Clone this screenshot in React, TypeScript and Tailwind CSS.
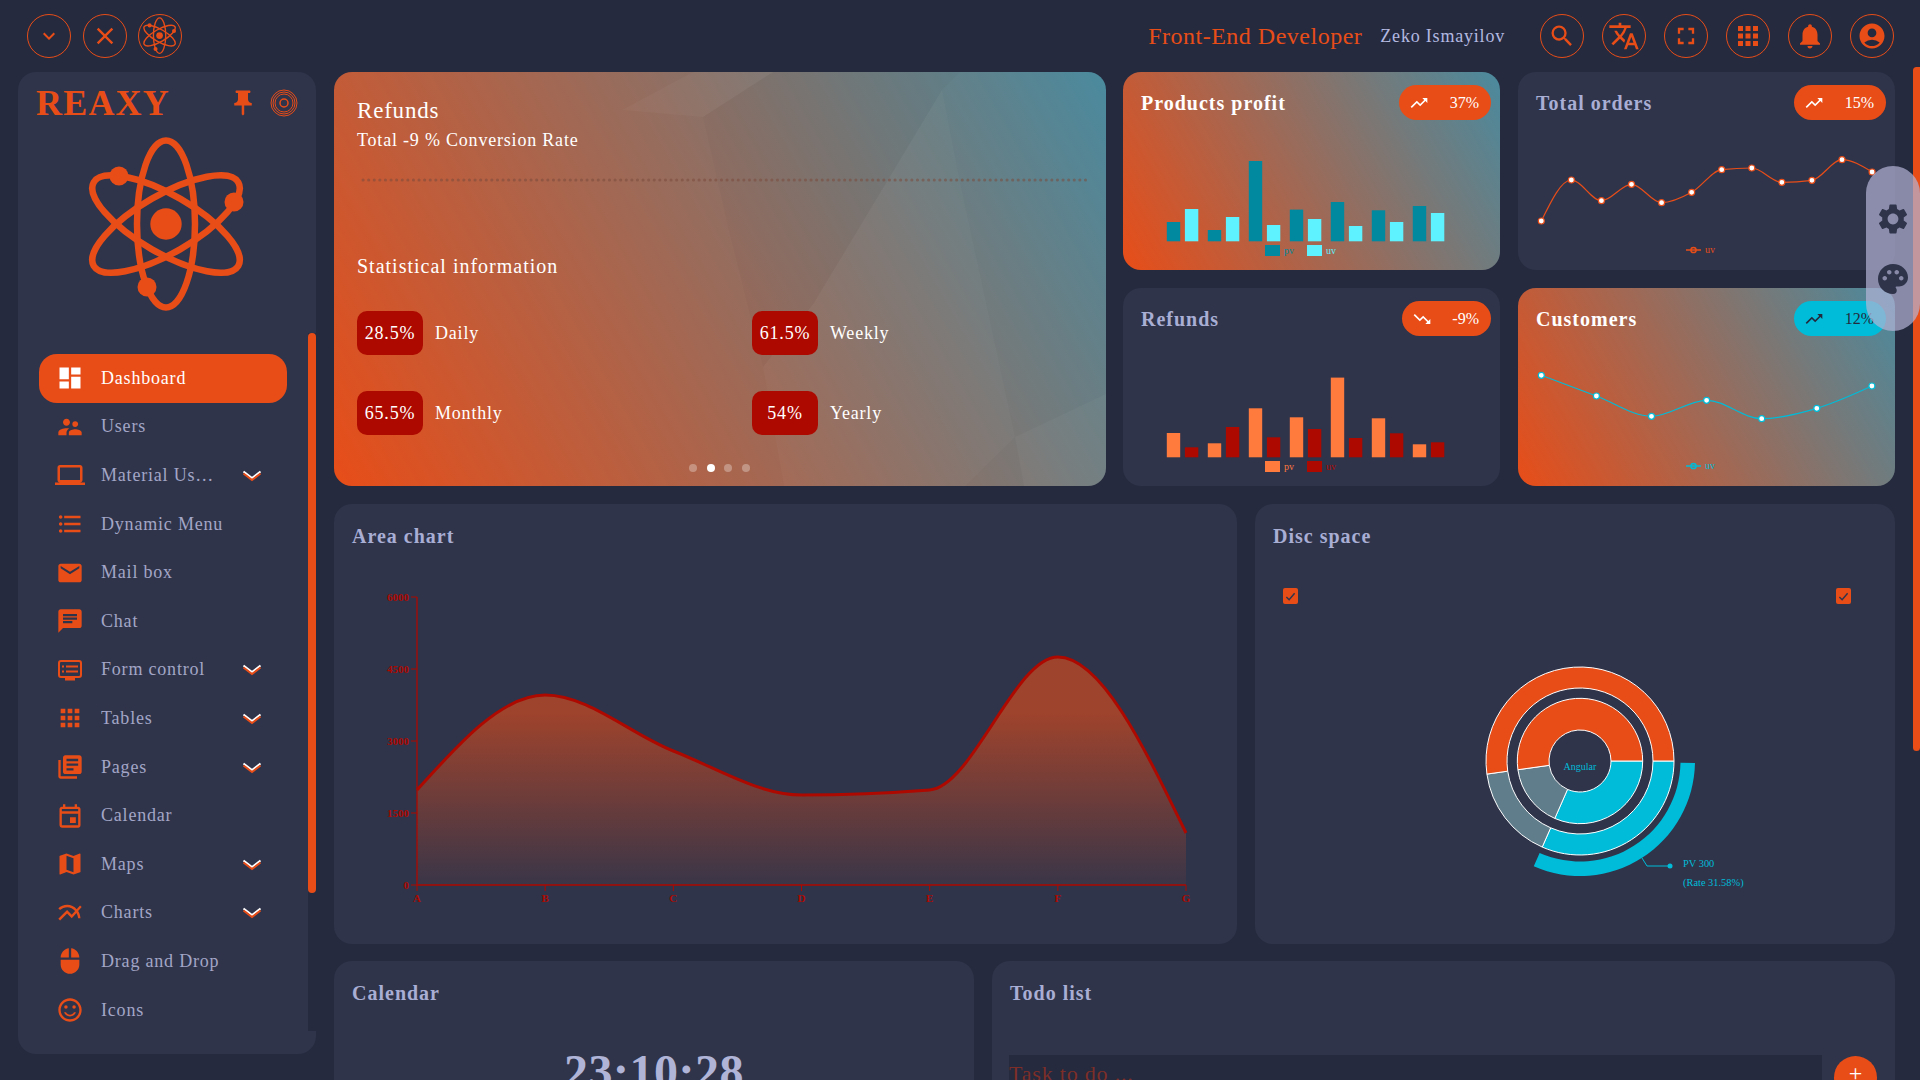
import type { ReactNode } from 'react';
import {
  MdDashboard, MdSupervisorAccount, MdLaptop, MdFormatListBulleted, MdEmail, MdChat, MdLibraryBooks,
  MdOutlineEvent, MdMap, MdMultilineChart, MdMouse, MdOutlineSentimentSatisfied, MdPushPin, MdSearch,
  MdTranslate, MdFullscreen, MdApps, MdNotifications, MdAccountCircle, MdKeyboardArrowDown, MdClose,
  MdTrendingUp, MdTrendingDown, MdSettings, MdPalette,
} from 'react-icons/md';

type Pt = [number, number];

// same curve recharts calls "monotone"
const monotonePath = (pts: Pt[]) => {
  const n = pts.length;
  const dx: number[] = [];
  const slope: number[] = [];
  for (let i = 0; i < n - 1; i++) {
    dx.push(pts[i + 1][0] - pts[i][0]);
    slope.push((pts[i + 1][1] - pts[i][1]) / dx[i]);
  }
  const tan: number[] = [slope[0]];
  for (let i = 1; i < n - 1; i++) {
    if (slope[i - 1] * slope[i] <= 0) tan.push(0);
    else {
      const p = (slope[i - 1] * dx[i] + slope[i] * dx[i - 1]) / (dx[i - 1] + dx[i]);
      tan.push(
        Math.sign(slope[i - 1]) * Math.min(Math.abs(slope[i - 1]), Math.abs(slope[i]), 0.5 * Math.abs(p)) * 2,
      );
    }
  }
  tan[0] = (3 * slope[0] - tan[1]) / 2;
  tan.push((3 * slope[n - 2] - tan[n - 2]) / 2);
  let d = `M${pts[0][0]},${pts[0][1]}`;
  for (let i = 0; i < n - 1; i++) {
    const h = dx[i] / 3;
    d += `C${pts[i][0] + h},${pts[i][1] + tan[i] * h} ${pts[i + 1][0] - h},${pts[i + 1][1] - tan[i + 1] * h} ${pts[i + 1][0]},${pts[i + 1][1]}`;
  }
  return d;
};

const polar = (cx: number, cy: number, r: number, deg: number): Pt => {
  const a = (deg * Math.PI) / 180;
  return [cx + r * Math.cos(a), cy + r * Math.sin(a)];
};

const arcPath = (cx: number, cy: number, r0: number, r1: number, a0: number, a1: number) => {
  const [x0, y0] = polar(cx, cy, r1, a0);
  const [x1, y1] = polar(cx, cy, r1, a1);
  const [x2, y2] = polar(cx, cy, r0, a1);
  const [x3, y3] = polar(cx, cy, r0, a0);
  const big = a1 - a0 > 180 ? 1 : 0;
  return `M${x0},${y0}A${r1},${r1} 0 ${big} 1 ${x1},${y1}L${x2},${y2}A${r0},${r0} 0 ${big} 0 ${x3},${y3}Z`;
};

const Atom = ({ className }: { className?: string }) => (
  <svg viewBox="0 0 160 178" className={className} fill="none" stroke="#e84d18" strokeWidth="6.5">
    <ellipse cx="78" cy="87" rx="29" ry="83.5" />
    <ellipse cx="78" cy="87" rx="29" ry="83.5" transform="rotate(60 78 87)" />
    <ellipse cx="78" cy="87" rx="29" ry="83.5" transform="rotate(-60 78 87)" />
    <g fill="#e84d18" stroke="none">
      <circle cx="78" cy="87" r="15.7" />
      <circle cx="31" cy="39" r="9.5" />
      <circle cx="146" cy="65" r="9.5" />
      <circle cx="59" cy="150" r="9.5" />
    </g>
  </svg>
);

const CircleBtn = ({ children }: { children: ReactNode }) => (
  <div className="w-11 h-11 rounded-full border border-[#e84d18] flex items-center justify-center text-[#e84d18]">
    {children}
  </div>
);

const FormIcon = () => (
  <svg viewBox="0 0 26 24" className="w-[26px] h-6" fill="none" stroke="#e84d18" strokeWidth="2">
    <rect x="2" y="3" width="22" height="16" rx="2" />
    <path d="M5 8.5h2M9 8.5h12M5 13.5h2M9 13.5h12" />
    <path d="M8 21h10" strokeWidth="3" />
  </svg>
);

const DoubleChevron = () => (
  <svg viewBox="0 0 20 13" className="w-5 h-[13px]" fill="none" strokeWidth="2">
    <path d="M1.5 2.5 10 9l8.5-6.5" stroke="#fff" />
    <path d="M1.5 4.5 10 11l8.5-6.5" stroke="#e84d18" />
  </svg>
);

const menu: { label: string; icon: ReactNode; more?: boolean }[] = [
  { label: 'Dashboard', icon: <MdDashboard size={28} /> },
  { label: 'Users', icon: <MdSupervisorAccount size={28} /> },
  { label: 'Material User Interface', icon: <MdLaptop size={30} />, more: true },
  { label: 'Dynamic Menu', icon: <MdFormatListBulleted size={28} /> },
  { label: 'Mail box', icon: <MdEmail size={28} /> },
  { label: 'Chat', icon: <MdChat size={28} /> },
  { label: 'Form control', icon: <FormIcon />, more: true },
  { label: 'Tables', icon: <MdApps size={28} />, more: true },
  { label: 'Pages', icon: <MdLibraryBooks size={28} />, more: true },
  { label: 'Calendar', icon: <MdOutlineEvent size={28} /> },
  { label: 'Maps', icon: <MdMap size={28} />, more: true },
  { label: 'Charts', icon: <MdMultilineChart size={28} />, more: true },
  { label: 'Drag and Drop', icon: <MdMouse size={28} /> },
  { label: 'Icons', icon: <MdOutlineSentimentSatisfied size={28} /> },
];

const Sidebar = () => (
  <aside className="w-[298px] h-[982px] shrink-0 bg-[#2f344b] rounded-[18px] flex flex-col">
    <div className="h-[61px] flex items-center pl-[18px] pr-[18px]">
      <span className="text-[36px] font-bold text-[#e84d18] tracking-[1.2px] leading-none">REAXY</span>
      <MdPushPin size={30} className="ml-auto text-[#e84d18]" />
      <svg viewBox="0 0 28 28" className="w-7 h-7 ml-[12px]" fill="none" stroke="#e84d18" strokeWidth="1">
        <circle cx="14" cy="14" r="13" />
        <circle cx="14" cy="14" r="11" />
        <circle cx="14" cy="14" r="9" />
        <circle cx="14" cy="14" r="4" strokeWidth="1.5" />
      </svg>
    </div>
    <div className="h-[200px] flex justify-center pt-1">
      <Atom className="w-[160px] h-[178px] ml-[2px]" />
    </div>
    <div className="flex h-[698px]">
      <nav className="w-[290px] pl-[21px] pr-[21px] pt-[21px] overflow-hidden">
        {menu.map((m, i) => (
          <div
            key={m.label}
            className={`h-[48.6px] flex items-center rounded-[18px] ${i === 0 ? 'bg-[#e84d18] text-white' : 'text-[#a3a6c6]'}`}
          >
            <div className={`w-[62px] shrink-0 flex justify-center ${i === 0 ? 'text-white' : 'text-[#e84d18]'}`}>{m.icon}</div>
            <span className={`text-[18px] tracking-[0.8px] truncate ${m.more ? 'w-[120px]' : ''}`}>{m.label}</span>
            {m.more && (
              <div className="ml-[21px]">
                <DoubleChevron />
              </div>
            )}
          </div>
        ))}
      </nav>
      <div className="w-2 bg-[#252a3e]">
        <div className="h-[560px] bg-[#e84d18] rounded-full" />
      </div>
    </div>
  </aside>
);

const Pill = ({ value, down, cyan }: { value: string; down?: boolean; cyan?: boolean }) => (
  <div
    className={`h-[35px] rounded-full flex items-center justify-between pl-[10px] pr-[12px] text-[16px] ${down ? 'w-[89px]' : 'w-[92px]'} ${cyan ? 'bg-[#00bcd8] text-[#232a3d]' : 'bg-[#e84d18] text-white'}`}
  >
    {down ? <MdTrendingDown size={20} /> : <MdTrendingUp size={20} />}
    <span>{value}</span>
  </div>
);

const gradient = 'bg-[linear-gradient(60deg,#e84d18,#4a8a9e)]';

const StatCard = ({
  title,
  pill,
  hot,
  children,
}: {
  title: string;
  pill: ReactNode;
  hot?: boolean;
  children: ReactNode;
}) => (
  <div className={`w-[377px] h-[198px] rounded-[18px] overflow-hidden ${hot ? gradient : 'bg-[#2f344b]'}`}>
    <div className="h-[70px] flex items-start justify-between pl-[18px] pr-[9px] pt-[13px]">
      <h3 className={`text-[20px] font-bold tracking-[1px] leading-[37px] ${hot ? 'text-white' : 'text-[#a9aed4]'}`}>{title}</h3>
      {pill}
    </div>
    <svg viewBox="0 70 377 128" className="block w-[377px] h-[128px]">
      {children}
    </svg>
  </div>
);

const Bars = ({ pv, uv, c1, c2 }: { pv: number[]; uv: number[]; c1: string; c2: string }) => (
  <>
    {pv.map((h, i) => (
      <g key={i}>
        <rect x={43.8 + i * 41} y={169.3 - h} width="13.4" height={h} fill={c1} />
        <rect x={61.9 + i * 41} y={169.3 - uv[i]} width="13.4" height={uv[i]} fill={c2} />
      </g>
    ))}
    <rect x="142" y="173" width="15" height="11" fill={c1} />
    <text x="161" y="182" fontSize="10" fill={c1}>pv</text>
    <rect x="184" y="173" width="15" height="11" fill={c2} />
    <text x="203" y="182" fontSize="10" fill={c2}>uv</text>
  </>
);

const LineSeries = ({ pts, color }: { pts: Pt[]; color: string }) => (
  <>
    <path d={monotonePath(pts)} fill="none" stroke={color} strokeWidth="1.2" />
    {pts.map(([x, y]) => (
      <circle key={x} cx={x} cy={y} r="3" fill="#fff" stroke={color} strokeWidth="1.2" />
    ))}
    <path d="M168 178h15" stroke={color} strokeWidth="1.5" />
    <circle cx="175.5" cy="178" r="2.6" fill="none" stroke={color} strokeWidth="1.5" />
    <text x="187" y="181" fontSize="10" fill={color}>uv</text>
  </>
);

const orders: Pt[] = [149, 108, 128.7, 112.3, 130.7, 120.3, 97.7, 96, 110.3, 108.3, 87.7, 100].map((y, i) => [23.3 + i * 30.07, y]);
const customers: Pt[] = [87.3, 108, 128.3, 112.3, 130.7, 120.3, 98].map((y, i) => [23.3 + i * 55.1, y]);
const areaPts: Pt[] = [286, 191, 247, 291, 286, 153, 329].map((y, i) => [83 + i * 128.17, y]);

const AreaChart = () => (
  <svg viewBox="0 64 903 376" className="block w-[903px] h-[376px]">
    <defs>
      <linearGradient id="areaFill" x1="0" y1="0" x2="0" y2="1">
        <stop offset="0.25" stopColor="#e84d18" stopOpacity="0.6" />
        <stop offset="1" stopColor="#e84d18" stopOpacity="0.06" />
      </linearGradient>
    </defs>
    <path d={`${monotonePath(areaPts)}L852,381L83,381Z`} fill="url(#areaFill)" />
    <path d={monotonePath(areaPts)} fill="none" stroke="#ad0900" strokeWidth="3" />
    <path d="M83 93V381H852" fill="none" stroke="#ad0900" strokeWidth="1.3" />
    {['6000', '4500', '3000', '1500', '0'].map((t, i) => (
      <g key={t}>
        <path d={`M77 ${93 + i * 72}h6`} stroke="#ad0900" />
        <text x="75" y={96.5 + i * 72} textAnchor="end" fontSize="11" fontWeight="bold" fill="#ad0900">{t}</text>
      </g>
    ))}
    {['A', 'B', 'C', 'D', 'E', 'F', 'G'].map((t, i) => (
      <g key={t}>
        <path d={`M${83 + i * 128.17} 381v6`} stroke="#ad0900" />
        <text x={83 + i * 128.17} y="398" textAnchor="middle" fontSize="11" fontWeight="bold" fill="#ad0900">{t}</text>
      </g>
    ))}
  </svg>
);

const slices = [
  { from: 0, to: 113.7, fill: '#00bcd8' },
  { from: 113.7, to: 172, fill: '#607d8b' },
  { from: 172, to: 360, fill: '#e84d18' },
];

const DiscChart = () => (
  <svg viewBox="0 100 640 340" className="block w-[640px] h-[340px]">
    {slices.map((s) => (
      <g key={s.from} fill={s.fill} stroke="#fff" strokeWidth="1">
        <path d={arcPath(325, 257, 31, 62.7, s.from, s.to)} />
        <path d={arcPath(325, 257, 73, 94, s.from, s.to)} />
      </g>
    ))}
    <path d={arcPath(325, 257, 100.5, 115, 1, 113.7)} fill="#00bcd8" />
    <text x="325" y="265.5" textAnchor="middle" fontSize="10" fill="#00bcd8">Angular</text>
    <path d="M387 354l5 8h23" fill="none" stroke="#00bcd8" />
    <circle cx="415" cy="362" r="2.5" fill="#00bcd8" />
    <text x="428" y="363" fontSize="10.4" fill="#00bcd8">PV 300</text>
    <text x="428" y="382" fontSize="10.4" fill="#00bcd8">(Rate 31.58%)</text>
  </svg>
);

const Check = () => (
  <div className="w-[15px] h-4 bg-[#e84d18] rounded-[2px] flex items-center justify-center">
    <svg viewBox="0 0 12 12" className="w-[11px] h-[11px]" fill="none" stroke="#2f344b" strokeWidth="1.6">
      <path d="M1.5 6.5 4.5 9.5 10.5 2.5" />
    </svg>
  </div>
);

const stats = [
  ['28.5%', 'Daily'],
  ['61.5%', 'Weekly'],
  ['65.5%', 'Monthly'],
  ['54%', 'Yearly'],
];

const Hero = () => (
  <div className={`relative w-[772px] h-[414px] rounded-[18px] overflow-hidden text-white ${gradient}`}>
    {/* faint facets behind the text */}
    <svg viewBox="0 0 772 414" className="absolute inset-0 w-full h-full">
      <polygon points="288,38 359,0 439,0 369,45" fill="#fff" opacity="0.03" />
      <polygon points="369,45 439,0 626,0 608,18 480,231 429,295 394,155" fill="#000" opacity="0.02" />
      <polygon points="608,18 626,110 681,365 631,414 450,414 429,295 480,231" fill="#fff" opacity="0.025" />
      <polygon points="681,365 772,322 772,414 690,414" fill="#fff" opacity="0.03" />
    </svg>
    <div className="relative pl-[23px] pr-[18px] tracking-[0.8px]">
      <h2 className="pt-[22px] text-[23px] leading-[33px]">Refunds</h2>
      <p className="text-[18px] leading-[26px]">Total -9 % Conversion Rate</p>
      <svg className="block mt-[25px] w-full h-1">
        <line x1="6" y1="2" x2="100%" y2="2" stroke="#7a4a3c" strokeOpacity="0.55" strokeWidth="3" strokeDasharray="0.1 5.5" strokeLinecap="round" />
      </svg>
      <h3 className="mt-[69px] text-[20px] tracking-[1px] leading-[30px]">Statistical information</h3>
      <div className="mt-[30px] grid grid-cols-[395px_1fr] gap-y-[36px]">
        {stats.map(([v, l]) => (
          <div key={l} className="flex items-center">
            <div className="w-[66px] h-11 rounded-[10px] bg-[#ad0900] flex items-center justify-center text-[18px]">{v}</div>
            <span className="ml-[12px] text-[18px]">{l}</span>
          </div>
        ))}
      </div>
      <div className="mt-[29px] flex justify-center gap-[9.7px] pr-[6px]">
        {[0, 1, 2, 3].map((i) => (
          <div key={i} className={`w-2 h-2 rounded-full ${i === 1 ? 'bg-white' : 'bg-white/30'}`} />
        ))}
      </div>
    </div>
  </div>
);

const PanelTitle = ({ children }: { children: ReactNode }) => (
  <h3 className="text-[20px] font-bold tracking-[1px] text-[#a9aed4] h-16 pt-[19px] pl-[18px] leading-[26px]">{children}</h3>
);

const App = () => (
  <div className="relative w-screen h-screen overflow-hidden bg-[#252a3e] font-['Liberation_Serif',serif]">
    <header className="h-[67px] flex items-start pt-[14px] pl-[27px] pr-[26px]">
      <div className="flex gap-[11.5px]">
        <CircleBtn><MdKeyboardArrowDown size={24} /></CircleBtn>
        <CircleBtn><MdClose size={28} /></CircleBtn>
        <CircleBtn><Atom className="w-[34px] h-[38px]" /></CircleBtn>
      </div>
      <span className="ml-auto text-[#e84d18] text-[24px] leading-[44px] tracking-[0.5px]">Front-End Developer</span>
      <span className="ml-[18px] mr-[35px] text-[#b3b9e0] text-[18px] leading-[44px] tracking-[0.8px]">Zeko Ismayilov</span>
      <div className="flex gap-[18px]">
        <CircleBtn><MdSearch size={28} /></CircleBtn>
        <CircleBtn><MdTranslate size={32} /></CircleBtn>
        <CircleBtn><MdFullscreen size={28} /></CircleBtn>
        <CircleBtn><MdApps size={30} /></CircleBtn>
        <CircleBtn><MdNotifications size={30} /></CircleBtn>
        <CircleBtn><MdAccountCircle size={30} /></CircleBtn>
      </div>
    </header>
    <div className="flex pl-[18px]">
      <div className="pt-[5px]">
        <Sidebar />
      </div>
      <main className="ml-[18px] w-[1561px] pt-[5px] flex flex-col gap-[18px]">
        <div className="flex gap-[17px]">
          <Hero />
          <div className="grid grid-cols-[377px_377px] gap-x-[18px] gap-y-[18px]">
            <StatCard title="Products profit" hot pill={<Pill value="37%" />}>
              <Bars
                pv={[19.3, 11.3, 80.3, 31.7, 39.3, 31, 35.3]}
                uv={[32.3, 24.3, 16.3, 22.3, 15.3, 19.3, 28.3]}
                c1="#00899f"
                c2="#5ef1ff"
              />
            </StatCard>
            <StatCard title="Total orders" pill={<Pill value="15%" />}>
              <LineSeries pts={orders} color="#e84d18" />
            </StatCard>
            <StatCard title="Refunds" pill={<Pill value="-9%" down />}>
              <Bars
                pv={[24.3, 14, 49, 40, 79.7, 39, 13]}
                uv={[10, 30.3, 20, 28.3, 19.3, 24, 15]}
                c1="#ff7a3d"
                c2="#ad0900"
              />
            </StatCard>
            <StatCard title="Customers" hot pill={<Pill value="12%" cyan />}>
              <LineSeries pts={customers} color="#00bcd8" />
            </StatCard>
          </div>
        </div>
        <div className="flex gap-[18px]">
          <section className="w-[903px] h-[440px] bg-[#2f344b] rounded-[18px]">
            <PanelTitle>Area chart</PanelTitle>
            <AreaChart />
          </section>
          <section className="w-[640px] h-[440px] bg-[#2f344b] rounded-[18px]">
            <PanelTitle>Disc space</PanelTitle>
            <div className="h-9 pt-5 pl-7 pr-11 flex justify-between">
              <Check />
              <Check />
            </div>
            <DiscChart />
          </section>
        </div>
        <div className="flex gap-[18px] -mt-px">
          <section className="w-[640px] h-[400px] bg-[#2f344b] rounded-[18px]">
            <PanelTitle>Calendar</PanelTitle>
            <div className="mt-[22px] text-center text-[48px] font-bold leading-[50px] tracking-[0.5px] text-[#b0b5d8]">23:10:28</div>
          </section>
          <section className="w-[903px] h-[400px] bg-[#2f344b] rounded-[18px] px-[17px]">
            <div className="-ml-[17px]">
              <PanelTitle>Todo list</PanelTitle>
            </div>
            <div className="mt-[30px] flex">
              <div className="w-[813px] h-12 bg-[#252a3e] text-[22px] tracking-[0.8px] text-[#7d2e28] leading-[34px] pt-[2px]">Task to do ...</div>
              <div className="ml-3 w-[43px] h-[43px] mt-px rounded-full bg-[#e84d18] text-white flex items-start justify-center text-[24px] leading-[34px]">+</div>
            </div>
          </section>
        </div>
      </main>
      <div className="ml-[18px] w-[7px]">
        <div className="h-[684px] bg-[#e84d18] rounded-b-full rounded-tl-full" />
      </div>
    </div>
    {/* floating settings tab */}
    <div className="absolute right-0 top-[166px] w-[54px] h-[165px] rounded-[27px] bg-[#b3b4d5]/70 flex flex-col items-center justify-center gap-[24px] text-[#2f344b]">
      <MdSettings size={36} />
      <MdPalette size={36} />
    </div>
  </div>
);

export default App;
